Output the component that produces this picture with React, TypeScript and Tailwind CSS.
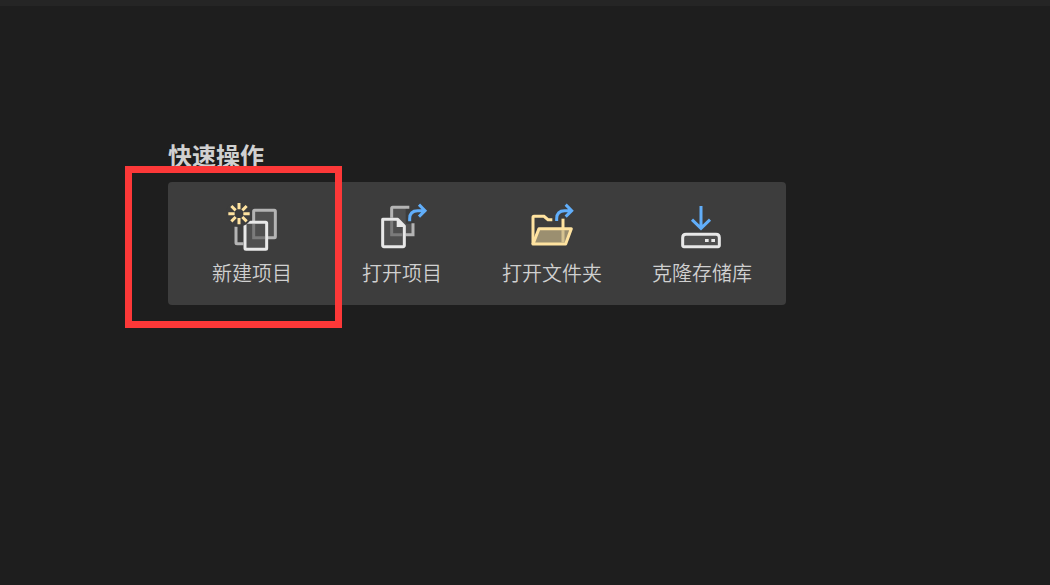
import { ReactNode } from "react";

type QuickAction = {
  id: string;
  label: string;
  icon: ReactNode;
};

const NewProjectIcon = () => (
  <svg viewBox="21 21 150 150" fill="none" className="size-[50px] overflow-visible">
    <rect x="101" y="46" width="65" height="82" rx="3" fill="#505050" stroke="#b4b4b4" strokeWidth="9" />
    <path d="M48 95V143Q48 146 51 146H70" stroke="#b4b4b4" strokeWidth="9" />
    <rect x="75" y="82" width="65" height="81" rx="3" fill="#4f4f4f" stroke="#e8e8e8" strokeWidth="9" />
    <path d="M101 87V128H135" stroke="#7b7b7b" strokeWidth="9" />
    <circle cx="57" cy="56" r="39" fill="#3d3d3d" />
    <g stroke="#ffe3a0" strokeWidth="9">
      <path d="M57 24V43M57 69V88M25 56H44M70 56H89" />
      <path d="M34 33L47 46M67 66L80 79M80 33L67 46M47 66L34 79" />
    </g>
  </svg>
);

const OpenProjectIcon = () => (
  <svg viewBox="21 21 150 150" fill="none" className="size-[50px] overflow-visible">
    <path d="M65 37H107V86H129V119H65Z" fill="#505050" />
    <path d="M65 68V40Q65 37 68 37H118" stroke="#b4b4b4" strokeWidth="9" />
    <path d="M129 85V119H107" stroke="#b4b4b4" strokeWidth="9" />
    <path d="M38 73H83L103 93V151Q103 155 99 155H42Q38 155 38 151Z" fill="#4f4f4f" stroke="#e8e8e8" strokeWidth="9" strokeLinejoin="round" />
    <path d="M65 78V119H98" stroke="#7b7b7b" strokeWidth="9" />
    <path d="M80 71L105 96H80Z" fill="#e8e8e8" />
    <path d="M119 79V71Q119 47 143 47H164" stroke="#3d3d3d" strokeWidth="22" />
    <path d="M119 79V71Q119 47 143 47H164M147 29L165 47L147 65" stroke="#61aefa" strokeWidth="9" />
  </svg>
);

const OpenFolderIcon = () => (
  <svg viewBox="21 21 150 150" fill="none" className="size-[50px] overflow-visible">
    <path d="M39 148V67Q39 64 42 64H72L84 74H97" stroke="#ffe3a0" strokeWidth="9" />
    <path d="M129 71V144" stroke="#ffe3a0" strokeWidth="9" />
    <path d="M57 101H154L137 147H39Z" fill="#9b8f70" stroke="#ffe3a0" strokeWidth="9" strokeLinejoin="round" />
    <path d="M129 105V143" stroke="#d6c390" strokeWidth="9" />
    <path d="M110 78V71Q110 47 134 47H155M137 29L155 47L137 65" stroke="#61aefa" strokeWidth="9" />
  </svg>
);

const CloneIcon = () => (
  <svg viewBox="21 21 150 150" fill="none" className="size-[50px] overflow-visible">
    <path d="M93 33V99M66 74L93 100L120 74" stroke="#61aefa" strokeWidth="9" />
    <path d="M48 118H138Q148 118 148 128V151Q148 155 144 155H42Q38 155 38 151V128Q38 118 48 118Z" fill="#4f4f4f" stroke="#e8e8e8" strokeWidth="9" />
    <path d="M105 132H116V141H105ZM124 132H135V141H124Z" fill="#e8e8e8" />
  </svg>
);

const actions: QuickAction[] = [
  { id: "new-project", label: "新建项目", icon: <NewProjectIcon /> },
  { id: "open-project", label: "打开项目", icon: <OpenProjectIcon /> },
  { id: "open-folder", label: "打开文件夹", icon: <OpenFolderIcon /> },
  { id: "clone", label: "克隆存储库", icon: <CloneIcon /> },
];

const QuickActionButton = ({ label, icon }: { label: string; icon: ReactNode }) => (
  <button
    type="button"
    className="flex w-[150px] flex-col items-center gap-2 pt-5 pb-[19px] text-xl leading-[26px] font-[350] whitespace-nowrap text-[#d0d0d0]"
  >
    {icon}
    {label}
  </button>
);

const App = () => {
  return (
    <div className="flex min-h-screen flex-col bg-[#1e1e1e] font-['Noto_Sans_CJK_SC',sans-serif]">
      <header className="h-[6px] bg-[#252525]" />
      <main className="flex flex-1 flex-col items-start px-[168px] pt-[133px]">
        <h1 className="text-2xl leading-8 font-bold text-[#d0d0d0]">快速操作</h1>
        <div className="relative mt-[11px] flex rounded-[4px] bg-[#3d3d3d] px-[9px]">
          {actions.map((action) => (
            <QuickActionButton key={action.id} label={action.label} icon={action.icon} />
          ))}
          {/* highlight around the first action */}
          <div className="pointer-events-none absolute -top-4 -left-[43px] h-[162px] w-[217px] border-7 border-[#fc3838]" />
        </div>
      </main>
    </div>
  );
};

export default App;
